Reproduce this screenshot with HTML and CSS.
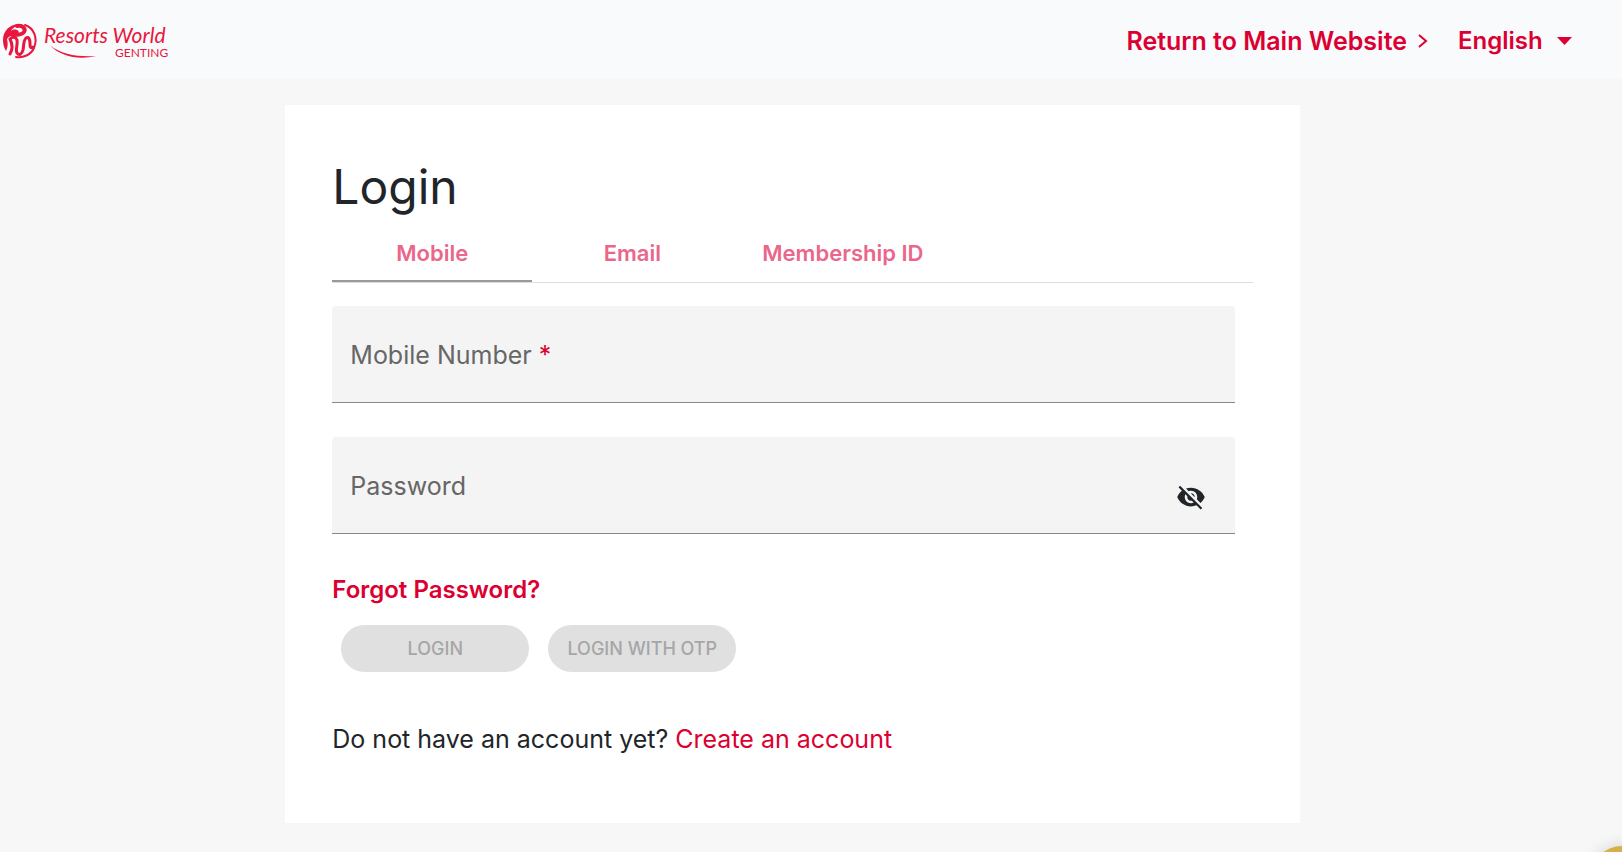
FILE: index.html
```html
<!DOCTYPE html>
<html lang="en">
<head>
	<meta charset="utf-8">
	<meta name="viewport" content="width=device-width, initial-scale=1">
	<title>Login</title>
	<link rel="stylesheet" href="styles.css">
</head>
<body>
	<header class="navbar">
		<a href="#" class="logo" aria-label="Resorts World Genting">
			<svg width="172" height="36" viewBox="0 0 172 36">
				<!-- round emblem: red crescent on the left, ribbon running through it -->
				<path d="M20 2C9-1 0 7 0 17C0 21 1 25 3 28C5 24 5 20 4 16C6 13 9 12 12 12C16 12 17 8 14 7C11 6 9 7 8 8C10 4 15 2 20 2Z" fill="#e8173d"/>
				<path d="M7 31C10 26 9 20 7 16C10 13 13 14 14 17C15 22 12 27 14 30C16 33 19 31 20 27C21 23 20 18 23 15C26 13 27 17 27 21C27 24 28 26 30 24" fill="none" stroke="#e8173d" stroke-width="3" stroke-linecap="round"/>
				<path d="M14 3C20 2 23 6 21 9C19 12 14 12 10 12" fill="none" stroke="#e8173d" stroke-width="4" stroke-linecap="round"/>
				<path d="M22 2C31 5 35 15 31 25C28 32 20 35 13 34" fill="none" stroke="#e8173d" stroke-width="2" stroke-linecap="round"/>
				<path class="swoosh" d="M47 22C58 32 76 34 93 33C77 37 57 34 47 22Z"/>
				<text class="logo-script" x="41" y="20">Resorts World</text>
				<text class="logo-place" x="112" y="34">GENTING</text>
			</svg>
		</a>
		<nav class="nav-links">
			<a href="#" class="nav-link">Return to Main Website
				<svg width="10" height="16" viewBox="0 0 10 16"><path d="M1 2l7 6-7 6" fill="none" stroke="currentColor" stroke-width="2"/></svg>
			</a>
			<div class="language">
				<select aria-label="Language">
					<option>English</option>
				</select>
				<svg width="15" height="8" viewBox="0 0 15 8"><path d="M0 0h15L7.500 8z" fill="currentColor"/></svg>
			</div>
		</nav>
	</header>

	<main class="page">
		<section class="card">
			<h1>Login</h1>
			<div class="tabs" role="tablist">
				<button type="button" class="tab active" role="tab" aria-selected="true">Mobile</button>
				<button type="button" class="tab" role="tab" aria-selected="false">Email</button>
				<button type="button" class="tab" role="tab" aria-selected="false">Membership ID</button>
			</div>

			<form class="login-form">
				<div class="field">
					<label for="mobile">Mobile Number <span class="required">*</span></label>
					<input type="tel" id="mobile" required>
				</div>
				<div class="field">
					<label for="password">Password</label>
					<input type="password" id="password">
					<button type="button" class="toggle" aria-label="Show password">
						<svg width="30" height="30" viewBox="0 0 24 24"><path fill="currentColor" d="M12 7c2.760 0 5 2.240 5 5 0 .65-.13 1.260-.36 1.830l2.920 2.920c1.510-1.260 2.700-2.890 3.430-4.750-1.730-4.390-6-7.500-11-7.500-1.400 0-2.740.25-3.980.7l2.160 2.160C10.740 7.130 11.350 7 12 7zM2 4.270l2.280 2.280.46.46C3.080 8.300 1.780 10.020 1 12c1.730 4.390 6 7.500 11 7.500 1.550 0 3.030-.3 4.380-.84l.42.42L19.730 22 21 20.730 3.270 3 2 4.270zM7.530 9.800l1.550 1.550c-.05.21-.08.43-.08.65 0 1.660 1.340 3 3 3 .22 0 .44-.03.65-.08l1.550 1.550c-.67.33-1.410.53-2.200.53-2.760 0-5-2.240-5-5 0-.79.2-1.530.53-2.200zm4.310-.78l3.150 3.150.02-.16c0-1.660-1.340-3-3-3l-.17.01z"/></svg>
					</button>
				</div>
				<a href="#" class="forgot">Forgot Password?</a>
				<div class="actions">
					<button type="submit" class="btn" disabled>LOGIN</button>
					<button type="button" class="btn" disabled>LOGIN WITH OTP</button>
				</div>
			</form>

			<p class="signup">Do not have an account yet? <a href="#">Create an account</a></p>
		</section>
	</main>

	<button type="button" class="chat" aria-label="Chat"></button>
</body>
</html>
```

FILE: styles.css
```css
* {
	box-sizing: border-box;
}

html, body {
	height: 100%;
}

body {
	margin: 0;
	font-family: Inter, "Liberation Sans", sans-serif;
	font-size: 25px;
	line-height: 36px;
	color: #212529;
	background: #f7f7f7;
	overflow: hidden;
}

a {
	color: #dc0032;
	text-decoration: none;
}

button, input, select {
	font: inherit;
	color: inherit;
	border: 0;
	background: none;
}

svg {
	display: block;
}

/* top bar */
.navbar {
	display: flex;
	align-items: center;
	justify-content: space-between;
	height: 79px;
	padding: 2px 50px 0 3px;
	background: #f8fafc;
}

.swoosh {
	fill: #e8173d;
}

.logo-script {
	font-family: Lato, sans-serif;
	font-size: 21px;
	font-style: italic;
	fill: #e8173d;
}

.logo-place {
	font-family: Lato, sans-serif;
	font-size: 12px;
	fill: #e8173d;
}

.nav-links {
	display: flex;
	align-items: center;
	gap: 30px;
	font-weight: 600;
	color: #dc0032;
}

.nav-link {
	display: flex;
	align-items: center;
	gap: 11px;
}

.language {
	display: flex;
	align-items: center;
	gap: 14px;
	font-size: 24px;
}

.language select {
	appearance: none;
	padding: 0;
}

/* login card */
.page {
	padding: 26px 37px 26px 0;
}

.card {
	width: 64%;
	margin: 0 auto;
	padding: 54px 47px 66px;
	background: #fff;
}

h1 {
	margin: 0 0 12px;
	font-size: 48px;
	line-height: 56px;
	font-weight: 400;
}

.tabs {
	display: flex;
	border-bottom: 1px solid #ddd;
}

.tab {
	min-width: 200px;
	height: 55px;
	padding: 0 30px 2px;
	font-size: 22px;
	font-weight: 600;
	color: #ea668a;
	border-bottom: 2px solid transparent;
}

.tab.active {
	border-color: #999;
}

.login-form {
	padding: 23px 18px 0 0;
}

.field {
	display: grid;
	grid-template-columns: 1fr auto;
	align-items: center;
	height: 97px;
	margin-bottom: 34px;
	background: #f4f4f4;
	border-bottom: 1px solid #888;
	border-radius: 4px 4px 0 0;
}

.field label, .field input {
	grid-area: 1 / 1;
	padding: 2px 18px 0;
}

.field label {
	color: #666;
	pointer-events: none;
}

.field input {
	width: 100%;
	height: 96px;
}

.toggle {
	padding: 24px 29px 0 0;
}

.required {
	color: #dc0032;
}

.forgot {
	display: block;
	margin-top: 38px;
	font-size: 24px;
	font-weight: 600;
}

.actions {
	display: flex;
	gap: 19px;
	padding: 17px 9px 0;
}

.btn {
	min-width: 188px;
	height: 47px;
	padding: 0 18px;
	font-size: 18px;
	font-weight: 500;
	color: #a6a6a6;
	background: #e0e0e0;
	border-radius: 24px;
}

.signup {
	margin: 49px 0 0;
}

/* floating chat bubble, mostly below the fold */
.chat {
	position: fixed;
	right: -32px;
	bottom: -58px;
	width: 64px;
	height: 64px;
	background: #d4af4a;
	border-radius: 50%;
	box-shadow: 0 0 16px rgba(0, 0, 0, 0.15);
}
```
